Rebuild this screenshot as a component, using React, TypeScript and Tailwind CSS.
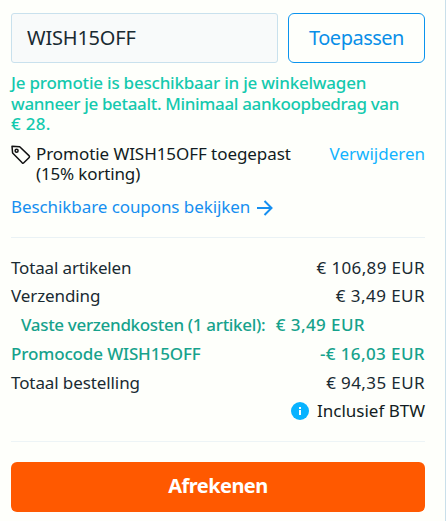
import type { ReactNode } from 'react';

function Row({ children, className = '' }: { children: ReactNode; className?: string }) {
  return <div className={`flex h-[28.8px] items-center justify-between ${className}`}>{children}</div>;
}

export default function App() {
  return (
    <main className="h-[521px] w-[446px] whitespace-nowrap border-r border-[#c9dfea] bg-[#fefffb] pl-[11px] pr-5 pt-[13px] font-['Noto_Sans',sans-serif] text-[17px] leading-[20.5px] text-[#192a32]">
      <div className="flex h-[50px] gap-[10px]">
        <input
          readOnly
          defaultValue="WISH15OFF"
          aria-label="Promocode"
          className="w-[267px] rounded-[3px] border border-[#c9e1ed] bg-[#f8fafa] pl-[15px] text-xl tracking-[-0.2px] outline-none"
        />
        <button type="button" className="w-[137px] rounded-md border border-[#0a93ee] text-xl tracking-[-0.5px] text-[#0a8fe8]">
          Toepassen
        </button>
      </div>

      <p className="mt-[10px] font-medium text-[#14c9ae]">
        <span className="block tracking-[-0.22px]">Je promotie is beschikbaar in je winkelwagen</span>
        <span className="block tracking-[-0.34px]">wanneer je betaalt. Minimaal aankoopbedrag van</span>
        <span className="block tracking-[0.3px]">€ 28.</span>
      </p>

      <div className="mt-[9px] flex h-[41px] text-[#111c22]">
        <svg viewBox="0 0 20 20" className="mt-px h-5 w-5 shrink-0" fill="none" stroke="#111" strokeWidth="1.5" strokeLinejoin="round">
          <path d="M1 1.2l.6 6.8 9.6 9.8c.6.5 1.1.5 1.6 0l5.4-5.3c.5-.5.5-1 0-1.6L8.7 1.7z" />
          <circle cx="5.6" cy="5.7" r="1.5" />
        </svg>
        <p className="ml-[5px]">
          <span className="block tracking-[-0.06px]">Promotie WISH15OFF toegepast</span>
          <span className="block tracking-[-0.15px]">(15% korting)</span>
        </p>
        <a className="ml-auto text-[#12b3ff]">Verwijderen</a>
      </div>

      <a className="mt-3 flex h-[22px] items-center text-[#168ff0]">
        <span className="tracking-[-0.08px]">Beschikbare coupons bekijken</span>
        <svg viewBox="0 0 16 16" className="ml-[7px] mt-px h-4 w-4" fill="none" stroke="currentColor" strokeWidth="2">
          <path d="M0 8h14M7.5 1l7 7-7 7" />
        </svg>
      </a>

      <hr className="mt-[18px] border-[#eaf2f5]" />

      <section className="mt-4 h-[173px]">
        <Row>
          <span className="tracking-[-0.15px]">Totaal artikelen</span>
          <span className="tracking-[0.35px]">€ 106,89 EUR</span>
        </Row>
        <Row>
          <span className="tracking-[-0.1px]">Verzending</span>
          <span className="tracking-[0.45px]">€ 3,49 EUR</span>
        </Row>
        <Row className="font-medium text-[#16a28c]">
          <span className="ml-[10px] tracking-[-0.32px]">Vaste verzendkosten (1 artikel):</span>
          <span className="mr-[60px] tracking-[0.4px]">€ 3,49 EUR</span>
        </Row>
        <Row className="font-medium text-[#16a28c]">
          <span className="tracking-[-0.14px]">Promocode WISH15OFF</span>
          <span className="tracking-[0.4px]">-€ 16,03 EUR</span>
        </Row>
        <Row>
          <span className="tracking-[-0.1px]">Totaal bestelling</span>
          <span className="tracking-[0.4px]">€ 94,35 EUR</span>
        </Row>
        <div className="flex h-[28px] items-center justify-end text-[#111c22]">
          <svg viewBox="0 0 18 18" className="mr-2 h-[18px] w-[18px]">
            <circle cx="9" cy="9" r="9" fill="#08b3ff" />
            <path d="M8 5h2v2H8zM8 8h2v5H8z" fill="#fff" />
          </svg>
          <span>Inclusief BTW</span>
        </div>
      </section>

      <hr className="mt-[14px] border-[#edf4f6]" />

      <button type="button" className="mt-5 h-[50px] w-full rounded-md bg-[#ff5900] pb-0.5 text-xl font-bold tracking-[-0.55px] text-white">
        Afrekenen
      </button>
    </main>
  );
}
